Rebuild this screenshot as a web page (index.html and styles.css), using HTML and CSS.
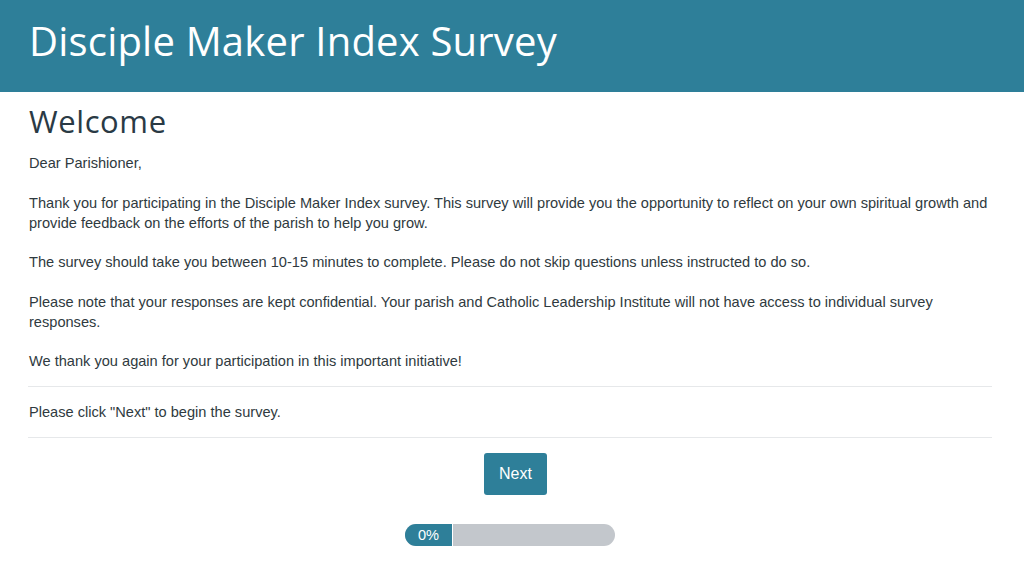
FILE: index.html
```html
<!DOCTYPE html>
<html lang="en">
<head>
<meta charset="utf-8">
<title>Disciple Maker Index Survey</title>
<link rel="stylesheet" href="styles.css">
</head>
<body>
<header class="site-header">
  <h1 class="site-title">Disciple Maker Index Survey</h1>
</header>
<main class="content">
  <h2 class="page-title">Welcome</h2>
  <p>Dear Parishioner,</p>
  <p>Thank you for participating in the Disciple Maker Index survey. This survey will provide you the opportunity to reflect on your own spiritual growth and provide feedback on the efforts of the parish to help you grow.</p>
  <p>The survey should take you between 10-15 minutes to complete. Please do not skip questions unless instructed to do so.</p>
  <p>Please note that your responses are kept confidential. Your parish and Catholic Leadership Institute will not have access to individual survey responses.</p>
  <p>We thank you again for your participation in this important initiative!</p>
  <div class="divider-block">
    <p>Please click "Next" to begin the survey.</p>
  </div>
  <div class="actions">
    <button class="btn-next" type="button">Next</button>
  </div>
  <div class="progress">
    <div class="progress-fill">0%</div>
  </div>
</main>
</body>
</html>
```

FILE: styles.css
```css
* { box-sizing: border-box; }
html, body { margin: 0; padding: 0; background: #fff; }
body {
  font-family: "Liberation Sans", Arial, sans-serif;
  font-size: 14.6px;
  line-height: 20px;
  color: #2f3a40;
}
.site-header {
  background: #2e7f99;
  height: 92px;
  padding: 0 29px;
  display: flex;
  align-items: center;
}
.site-title {
  margin: 0;
  margin-top: -10px;
  font-family: "Open Sans", sans-serif;
  font-weight: 400;
  font-size: 40px;
  color: #fff;
  letter-spacing: 0.2px;
}
.content {
  padding: 0 32px 0 28px;
  display: flex;
  flex-direction: column;
}
.page-title {
  margin: 8px 0 11px 1px;
  font-family: "Open Sans", sans-serif;
  font-weight: 400;
  font-size: 31px;
  line-height: 42px;
  letter-spacing: 0.6px;
  color: #2a3a45;
}
.content p {
  margin: 0 0 19.5px 1px;
}
.divider-block {
  border-top: 1px solid #e6e8ea;
  border-bottom: 1px solid #e6e8ea;
  margin-top: -4.5px;
  padding: 15px 0;
}
.divider-block p { margin: 0 0 0 1px; }
.content .divider-block p { margin: 0 0 0 1px; }
.actions {
  display: flex;
  justify-content: center;
  padding-top: 15px;
}
.btn-next {
  background: #2e7f99;
  color: #fff;
  border: none;
  border-radius: 3px;
  font-family: "Liberation Sans", Arial, sans-serif;
  font-size: 16px;
  width: 63px;
  height: 42px;
  padding: 0;
  margin-left: 11px;
}
.progress {
  align-self: center;
  margin-top: 29px;
  width: 210px;
  height: 22px;
  border-radius: 11px;
  background: #c3c7cc;
  overflow: hidden;
  display: flex;
}
.progress-fill {
  width: 48px;
  background: #2e7f99;
  color: #fff;
  font-size: 14.6px;
  line-height: 22px;
  text-align: center;
  border-right: 1px solid #fff;
}
```
